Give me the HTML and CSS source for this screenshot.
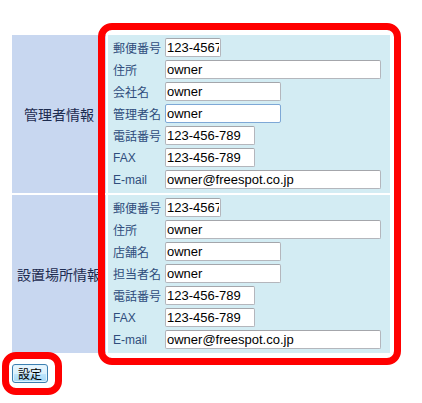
FILE: index.html
```html
<!DOCTYPE html>
<html>
  <head>
    <meta charset="utf-8">
    <title>設定</title>
    <link rel="stylesheet" href="styles.css">
  </head>
  <body>
    <div class="page">
      <table class="info">
        <tr>
          <td class="head">管理者情報</td>
          <td class="body">
            <div class="fields">
              <label>郵便番号</label><input class="w-zip" type="text" value="123-4567">
              <label>住所</label><input class="w-long" type="text" value="owner">
              <label>会社名</label><input class="w-mid" type="text" value="owner">
              <label>管理者名</label><input class="w-mid focus" type="text" value="owner">
              <label>電話番号</label><input class="w-tel" type="text" value="123-456-789">
              <label>FAX</label><input class="w-tel" type="text" value="123-456-789">
              <label>E-mail</label><input class="w-long" type="text" value="owner@freespot.co.jp">
            </div>
          </td>
        </tr>
        <tr>
          <td class="head">設置場所情報</td>
          <td class="body">
            <div class="fields">
              <label>郵便番号</label><input class="w-zip" type="text" value="123-4567">
              <label>住所</label><input class="w-long" type="text" value="owner">
              <label>店舗名</label><input class="w-mid" type="text" value="owner">
              <label>担当者名</label><input class="w-mid" type="text" value="owner">
              <label>電話番号</label><input class="w-tel" type="text" value="123-456-789">
              <label>FAX</label><input class="w-tel" type="text" value="123-456-789">
              <label>E-mail</label><input class="w-long" type="text" value="owner@freespot.co.jp">
            </div>
          </td>
        </tr>
      </table>
      <button class="submit">設定</button>
    </div>

    <!-- red annotation frames drawn over the form -->
    <div class="mark mark-form"></div>
    <div class="mark mark-btn"></div>
  </body>
</html>
```

FILE: styles.css
```css
body {
  margin: 0;
  background-color: #fff;
  font-family: "Liberation Sans", "Noto Sans CJK JP", sans-serif;
}

.page {
  padding: 33px 0 0 10px;
}

.info {
  border-collapse: separate;
  border-spacing: 2px;
}

.info td {
  padding: 0;
}

.head {
  width: 94px;
  height: 158px;
  background-color: #c8d7f0;
  color: #1d2b4f;
  font-family: "Noto Sans CJK JP", sans-serif;
  font-size: 14px;
  text-align: center;
  vertical-align: middle;
  white-space: nowrap;
  overflow: hidden;
  max-width: 94px;
}

.body {
  width: 282px;
  background-color: #d3ecf3;
  vertical-align: top;
}

.fields {
  display: grid;
  grid-template-columns: 52px auto;
  grid-auto-rows: 19px;
  row-gap: 3px;
  padding: 3px 0 4px 5px;
  align-items: center;
  justify-items: start;
}

.fields label {
  font-family: "Liberation Sans", "Noto Sans CJK JP", sans-serif;
  font-size: 12px;
  color: #2f4d7c;
  white-space: nowrap;
}

.fields input {
  box-sizing: border-box;
  height: 19px;
  margin: 0;
  padding: 0 1px;
  border: 1px solid #b4b6bc;
  border-top-color: #a4a6ab;
  border-radius: 2px;
  background-color: #fff;
  font-family: "Liberation Sans", sans-serif;
  font-size: 13px;
  color: #000;
  outline: none;
}

.fields input.focus {
  border-color: #7ea8d6;
}

.w-zip { width: 56px; }
.w-tel { width: 90px; }
.w-mid { width: 116px; }
.w-long { width: 216px; }

.submit {
  box-sizing: border-box;
  margin: 9px 0 0 2px;
  width: 36px;
  height: 19px;
  padding: 0;
  border: 1px solid #3c7fb1;
  border-radius: 3px;
  background: linear-gradient(#eaf6fd, #d9f0fc 50%, #bee6fd 51%, #a7d9f5);
  box-shadow: inset 0 0 0 1px #dff3fd;
  font-family: "Noto Sans CJK JP", sans-serif;
  font-size: 12px;
  line-height: 15px;
  color: #000;
}

.mark {
  position: absolute;
  box-sizing: border-box;
  border: 7px solid #ff0000;
  border-radius: 14px;
}

.mark-form {
  left: 98px;
  top: 23px;
  width: 303px;
  height: 342px;
}

.mark-btn {
  left: 2px;
  top: 352px;
  width: 60px;
  height: 43px;
}
```
